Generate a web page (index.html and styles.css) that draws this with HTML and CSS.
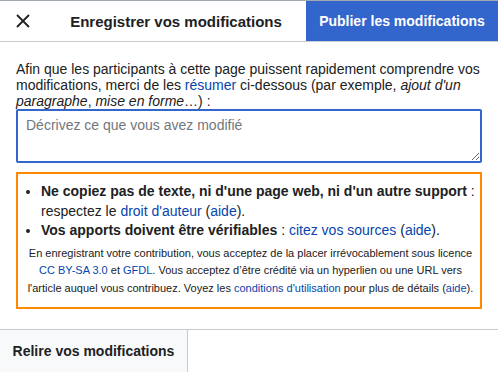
FILE: index.html
```html
<!DOCTYPE html>
<html lang="fr">
<head>
  <meta charset="UTF-8">
  <title>Enregistrer vos modifications</title>
  <link rel="stylesheet" href="styles.css">
</head>
<body>
  <div class="dialog">
    <!-- Barre du haut -->
    <div class="dialog-head">
      <button class="close-btn" aria-label="Fermer">
        <svg width="14" height="14" viewBox="0 0 14 14">
          <path d="M1 1 L13 13 M13 1 L1 13" stroke="#202122" stroke-width="1.8" fill="none"/>
        </svg>
      </button>
      <div class="dialog-title">Enregistrer vos modifications</div>
      <button class="publish-btn">Publier les modifications</button>
    </div>

    <div class="dialog-body">
      <p class="summary-label">
        Afin que les participants à cette page puissent rapidement comprendre vos modifications, merci de les <a href="#">résumer</a> ci-dessous (par exemple, <i>ajout d'un paragraphe</i>, <i>mise en forme</i>…) :
      </p>
      <textarea class="summary-input" placeholder="Décrivez ce que vous avez modifié"></textarea>

      <div class="warning-box">
        <ul>
          <li><b>Ne copiez pas de texte, ni d'une page web, ni d'un autre support</b> : respectez le <a href="#">droit d'auteur</a> (<a href="#">aide</a>).</li>
          <li><b>Vos apports doivent être vérifiables</b> : <a href="#">citez vos sources</a> (<a href="#">aide</a>).</li>
        </ul>
        <p class="license">
          En enregistrant votre contribution, vous acceptez de la placer irrévocablement sous licence <a href="#">CC BY-SA 3.0</a> et <a href="#">GFDL</a>. Vous acceptez d’être crédité via un hyperlien ou une URL vers l'article auquel vous contribuez. Voyez les <a href="#">conditions d'utilisation</a> pour plus de détails (<a href="#">aide</a>).
        </p>
      </div>
    </div>

    <div class="dialog-foot">
      <button class="review-btn">Relire vos modifications</button>
    </div>
  </div>
</body>
</html>
```

FILE: styles.css
```css
/* Dialogue d'enregistrement */
* {
  box-sizing: border-box;
}
html, body {
  margin: 0;
  height: 100%;
  background: #fff;
  color: #202122;
  font-family: "Liberation Sans", Arial, sans-serif;
  font-size: 14px;
}
a {
  color: #0645ad;
  text-decoration: none;
}

.dialog {
  height: 100%;
  display: flex;
  flex-direction: column;
  border-top: 1px solid #a2a9b1;
}

/* Header */
.dialog-head {
  display: flex;
  align-items: stretch;
  height: 41px;
  border-bottom: 1px solid #c8ccd1;
}
.close-btn {
  width: 46px;
  border: 0;
  background: none;
  padding: 0 0 0 16px;
  display: flex;
  align-items: center;
}
.dialog-title {
  flex: 1;
  display: flex;
  align-items: center;
  justify-content: center;
  font-weight: bold;
  font-size: 15px;
}
.publish-btn {
  width: 192px;
  border: 0;
  background: #36c;
  color: #fff;
  font-family: inherit;
  font-weight: bold;
  font-size: 14px;
  padding: 0;
}

/* Body */
.dialog-body {
  padding: 0 16px;
}
.summary-label {
  margin: 19px 0 0;
  line-height: 16px;
}
.summary-input {
  display: block;
  width: 100%;
  height: 54px;
  border: 2px solid #36c;
  border-radius: 2px;
  padding: 6px 8px;
  font-family: inherit;
  font-size: 14px;
  resize: vertical;
  outline: none;
}
.summary-input::placeholder {
  color: #72777d;
}

.warning-box {
  margin-top: 9px;
  border: 2px solid #f80;
  padding: 8px 3px 10px 6px;
}
.warning-box ul {
  margin: 0;
  padding-left: 17px;
  line-height: 19.5px;
}
.license {
  margin: 4px 0 0;
  text-align: center;
  font-size: 11px;
  line-height: 17.5px;
}

/* Footer */
.dialog-foot {
  margin-top: auto;
  border-top: 1px solid #c8ccd1;
  height: 43px;
  display: flex;
}
.review-btn {
  width: 188px;
  border: 0;
  border-right: 1px solid #c8ccd1;
  background: #f8f9fa;
  color: #202122;
  font-family: inherit;
  font-weight: bold;
  font-size: 14px;
  padding: 0;
}
```
